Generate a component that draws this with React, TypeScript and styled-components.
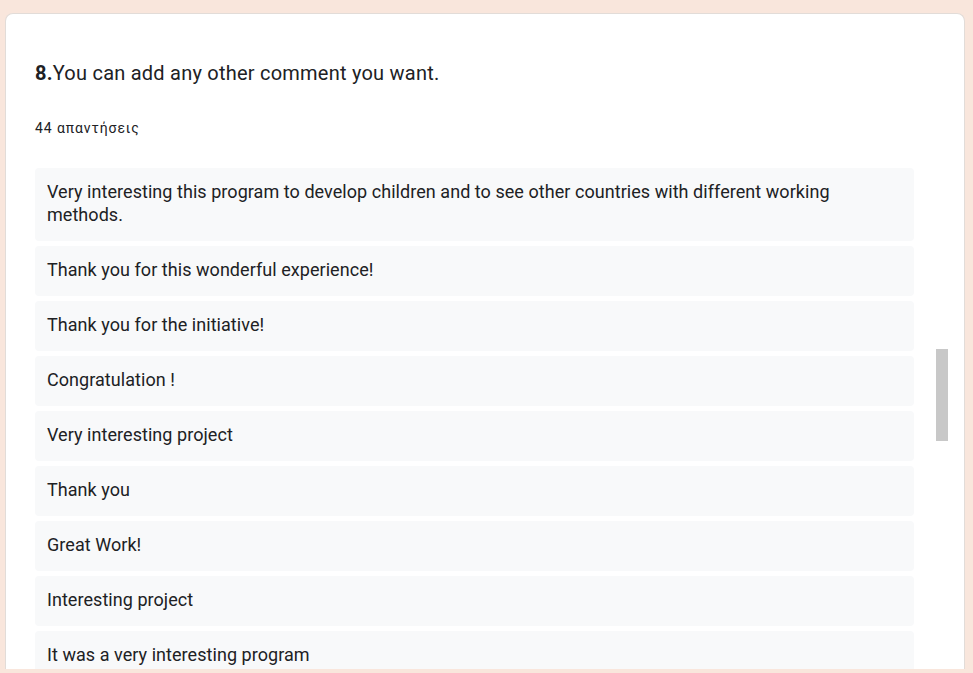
import React from "react";
import styled, { createGlobalStyle } from "styled-components";

const responses: string[] = [
  "Very interesting this program to develop children and to see other countries with different working methods.",
  "Thank you for this wonderful experience!",
  "Thank you for the initiative!",
  "Congratulation !",
  "Very interesting project",
  "Thank you",
  "Great Work!",
  "Interesting project",
  "It was a very interesting program",
];

const GlobalStyle = createGlobalStyle`
  html, body {
    margin: 0;
    padding: 0;
    background: #f9e6dc;
    font-family: Roboto, "Noto Sans", Arial, sans-serif;
    overflow: hidden;
  }
`;

const Page = styled.div`
  height: 673px;
  padding: 13px 8px 0 5px;
  box-sizing: border-box;
`;

const Card = styled.section`
  position: relative;
  height: 656px;
  background: #ffffff;
  border: 1px solid #e2dcd8;
  border-bottom: none;
  border-radius: 8px 8px 0 0;
  box-sizing: border-box;
  padding: 45px 50px 0 29px;
  overflow: hidden;
`;

const Title = styled.h2`
  margin: 0;
  font-size: 20px;
  line-height: 28px;
  font-weight: 400;
  color: #202124;
  letter-spacing: 0.23px;
`;

const Number = styled.span`
  font-weight: 700;
`;

const Count = styled.div`
  margin-top: 31px;
  font-size: 14px;
  line-height: 20px;
  color: #202124;
  letter-spacing: 0.9px;
`;

const List = styled.div`
  margin-top: 30px;
  display: flex;
  flex-direction: column;
  gap: 5px;
`;

const Item = styled.div`
  background: #f8f9fa;
  border-radius: 4px;
  padding: 12px 12px 15px;
  font-size: 18px;
  line-height: 23px;
  color: #202124;
  letter-spacing: 0.05px;
`;

const ScrollThumb = styled.div`
  position: absolute;
  top: 335px;
  right: 16px;
  width: 12px;
  height: 92px;
  background: #c8c8c8;
`;

const App: React.FC = () => {
  return (
    <Page>
      <GlobalStyle />
      <Card>
        <Title>
          <Number>8.</Number>You can add any other comment you want.
        </Title>
        <Count>44 απαντήσεις</Count>
        <List>
          {responses.map((text, i) => (
            <Item key={i}>{text}</Item>
          ))}
        </List>
        <ScrollThumb />
      </Card>
    </Page>
  );
};

export default App;
